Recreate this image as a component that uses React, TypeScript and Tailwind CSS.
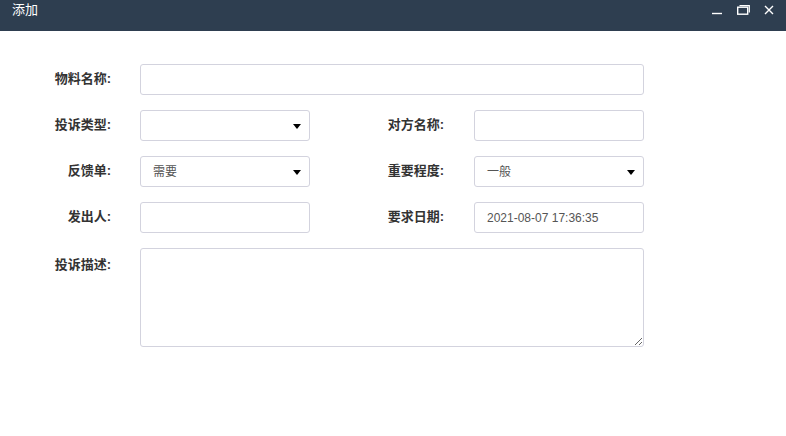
import React from 'react';

const font = { fontFamily: '"Liberation Sans", "Noto Sans CJK SC", sans-serif' };

const Caret = () => (
  <svg width="8" height="5" viewBox="0 0 8 5" className="absolute right-[8px] top-[13px]">
    <path d="M0 0 L8 0 L4 5 Z" fill="#000" />
  </svg>
);

const Label: React.FC<{ text: string; top?: boolean }> = ({ text, top }) => (
  <div className={`w-[71px] text-right text-[13px] font-bold text-[#333] ${top ? 'pt-[7px] self-start' : '-mt-[2px]'}`}>{text}</div>
);

const Field: React.FC<{ value?: string; select?: boolean; wide?: boolean }> = ({ value, select, wide }) => (
  <div
    className={`relative h-[31px] ${wide ? 'w-[504px]' : 'w-[170px]'} rounded-[3px] border border-[#d3d3de] bg-white pl-[12px] flex items-center text-[12px] text-[#555]`}
  >
    {value}
    {select && <Caret />}
  </div>
);

const App: React.FC = () => {
  return (
    <div className="w-[786px] h-[436px] bg-white overflow-hidden" style={font}>
      <header className="h-[31px] bg-[#2e3e50] flex items-center justify-between pl-[12px] pr-[12px]">
        <span className="text-white text-[13px] -mt-[11px]">添加</span>
        <div className="flex items-center gap-[14px] -mt-[12px]">
          <svg width="11" height="10" viewBox="0 0 11 10">
            <path d="M0 8.5 H10" stroke="#fff" strokeWidth="1.4" />
          </svg>
          <svg width="13" height="10" viewBox="0 0 13 10">
            <rect x="0.7" y="2.2" width="10" height="7" fill="none" stroke="#fff" strokeWidth="1.4" />
            <path d="M2.5 0.7 H12.3 V7.5" fill="none" stroke="#fff" strokeWidth="1.2" />
          </svg>
          <svg width="10" height="10" viewBox="0 0 10 10">
            <path d="M1 1 L9 9 M9 1 L1 9" stroke="#fff" strokeWidth="1.4" />
          </svg>
        </div>
      </header>

      <main className="pt-[33px] pl-[40px] flex flex-col gap-[15px]">
        <div className="flex items-center gap-[29px]">
          <Label text="物料名称:" />
          <Field wide />
        </div>
        <div className="flex items-center">
          <div className="flex items-center gap-[29px] w-[333px]">
            <Label text="投诉类型:" />
            <Field select />
          </div>
          <div className="flex items-center gap-[30px]">
            <Label text="对方名称:" />
            <Field />
          </div>
        </div>
        <div className="flex items-center">
          <div className="flex items-center gap-[29px] w-[333px]">
            <Label text="反馈单:" />
            <Field value="需要" select />
          </div>
          <div className="flex items-center gap-[30px]">
            <Label text="重要程度:" />
            <Field value="一般" select />
          </div>
        </div>
        <div className="flex items-center">
          <div className="flex items-center gap-[29px] w-[333px]">
            <Label text="发出人:" />
            <Field />
          </div>
          <div className="flex items-center gap-[30px]">
            <Label text="要求日期:" />
            <Field value="2021-08-07 17:36:35" />
          </div>
        </div>
        <div className="flex gap-[29px]">
          <Label text="投诉描述:" top />
          <textarea className="w-[504px] h-[99px] rounded-[3px] border border-[#d3d3de] bg-white outline-none" />
        </div>
      </main>
    </div>
  );
};

export default App;
